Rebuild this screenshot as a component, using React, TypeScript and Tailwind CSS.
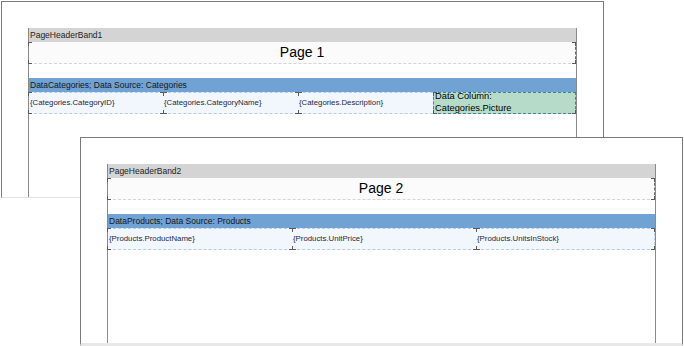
import React from "react";

const MARK = "bg-[#5a5a5a]";
const TL = "absolute top-[-1px] left-[-1px] w-[4px] h-[4px] border-l border-t border-[#5a5a5a]";
const BL = "absolute bottom-[-1px] left-[-1px] w-[4px] h-[4px] border-l border-b border-[#5a5a5a]";
const TR = "absolute top-[-1px] right-[-1px] w-[4px] h-[4px] border-r border-t border-[#5a5a5a]";
const BR = "absolute bottom-[-1px] right-[-1px] w-[4px] h-[4px] border-r border-b border-[#5a5a5a]";

function TeeTop() {
  return (
    <span className="absolute top-[-1px] left-[-3px] w-[7px] h-[4px] border-t border-[#5a5a5a] flex justify-center">
      <span className={`w-[1px] h-[3px] ${MARK}`} />
    </span>
  );
}
function TeeBottom() {
  return (
    <span className="absolute bottom-[-1px] left-[-3px] w-[7px] h-[4px] border-b border-[#5a5a5a] flex justify-center items-end">
      <span className={`w-[1px] h-[3px] ${MARK}`} />
    </span>
  );
}

type CellDef = { text: string; w: string; green?: boolean };

function Cell({ c, first, last }: { c: CellDef; first: boolean; last: boolean }) {
  if (c.green) {
    return (
      <div className={`relative shrink-0 h-[22px] ${c.w} bg-[#b6dcc9] border border-dashed border-[#4f7f8c] pl-[1px] text-[9.3px] leading-[11.5px] text-black`}>
        <div className="relative -top-[2px]">
          Data Column:
          <br />
          Categories.Picture
        </div>
        <span className={TL} />
        <span className={BL} />
        <span className={BR} />
      </div>
    );
  }
  return (
    <div
      className={`relative shrink-0 h-[22px] ${c.w} bg-[#f1f7fd] border-y border-dashed border-[#b5cce5] ${
        last ? "border-r border-r-[#b5cce5]" : ""
      } flex items-center pl-[1px] text-[7.8px] text-[#1f2840] whitespace-nowrap`}
    >
      {c.text}
      {first ? (
        <>
          <span className={TL} />
          <span className={BL} />
        </>
      ) : (
        <>
          <TeeTop />
          <TeeBottom />
        </>
      )}
      {last && (
        <>
          <span className={TR} />
          <span className={BR} />
        </>
      )}
    </div>
  );
}

function Band({
  header,
  title,
  source,
  cells,
}: {
  header: string;
  title: string;
  source: string;
  cells: CellDef[];
}) {
  return (
    <div className="w-[549px] flex-1 border-x border-[#8a8a8a] flex flex-col">
      <div className="h-[14px] bg-[#d4d4d4] pl-[1px] text-[8.5px] leading-[14px] text-[#1e1e1e] whitespace-nowrap">
        {header}
      </div>
      <div className="relative h-[22px] bg-[#fbfbfb] border-b border-r border-dashed border-b-[#d4d4d4] border-r-[#6a6a6a] flex items-center justify-center text-[14px] text-black">
        {title}
        <span className="absolute top-0 left-[-1px] w-[4px] h-[4px] border-l border-t border-[#5a5a5a]" />
        <span className={BL} />
        <span className="absolute top-0 right-[-1px] w-[4px] h-[4px] border-r border-t border-[#5a5a5a]" />
        <span className={BR} />
      </div>
      <div className="h-[14px]" />
      <div className="h-[14px] bg-[#70a2d3] pl-[1px] text-[8.5px] leading-[14px] text-[#161616] whitespace-nowrap">
        {source}
      </div>
      <div className="flex h-[22px]">
        {cells.map((c, i) => (
          <Cell key={i} c={c} first={i === 0} last={i === cells.length - 1} />
        ))}
      </div>
    </div>
  );
}

export default function App() {
  return (
    <div className="relative w-[684px] h-[346px] overflow-hidden bg-white font-['Liberation_Sans',Arial,sans-serif]">
      <div className="absolute left-[1px] top-[1px] w-[603px] h-[197px] border-x border-t border-[#7a7a7a] border-b border-b-[#e2e2e2] flex flex-col pt-[26px] pl-[26px] bg-white">
        <Band
          header="PageHeaderBand1"
          title="Page 1"
          source="DataCategories; Data Source: Categories"
          cells={[
            { text: "{Categories.CategoryID}", w: "w-[134px]" },
            { text: "{Categories.CategoryName}", w: "w-[135px]" },
            { text: "{Categories.Description}", w: "w-[135px]" },
            { text: "", w: "w-[143px]", green: true },
          ]}
        />
      </div>
      <div className="absolute left-[80px] top-[137px] w-[603px] h-[209px] border-x border-t border-[#7a7a7a] border-b-[3px] border-b-[#e8e8e8] flex flex-col pt-[26px] pl-[26px] bg-white">
        <Band
          header="PageHeaderBand2"
          title="Page 2"
          source="DataProducts; Data Source: Products"
          cells={[
            { text: "{Products.ProductName}", w: "w-[184px]" },
            { text: "{Products.UnitPrice}", w: "w-[184px]" },
            { text: "{Products.UnitsInStock}", w: "w-[179px]" },
          ]}
        />
      </div>
    </div>
  );
}
